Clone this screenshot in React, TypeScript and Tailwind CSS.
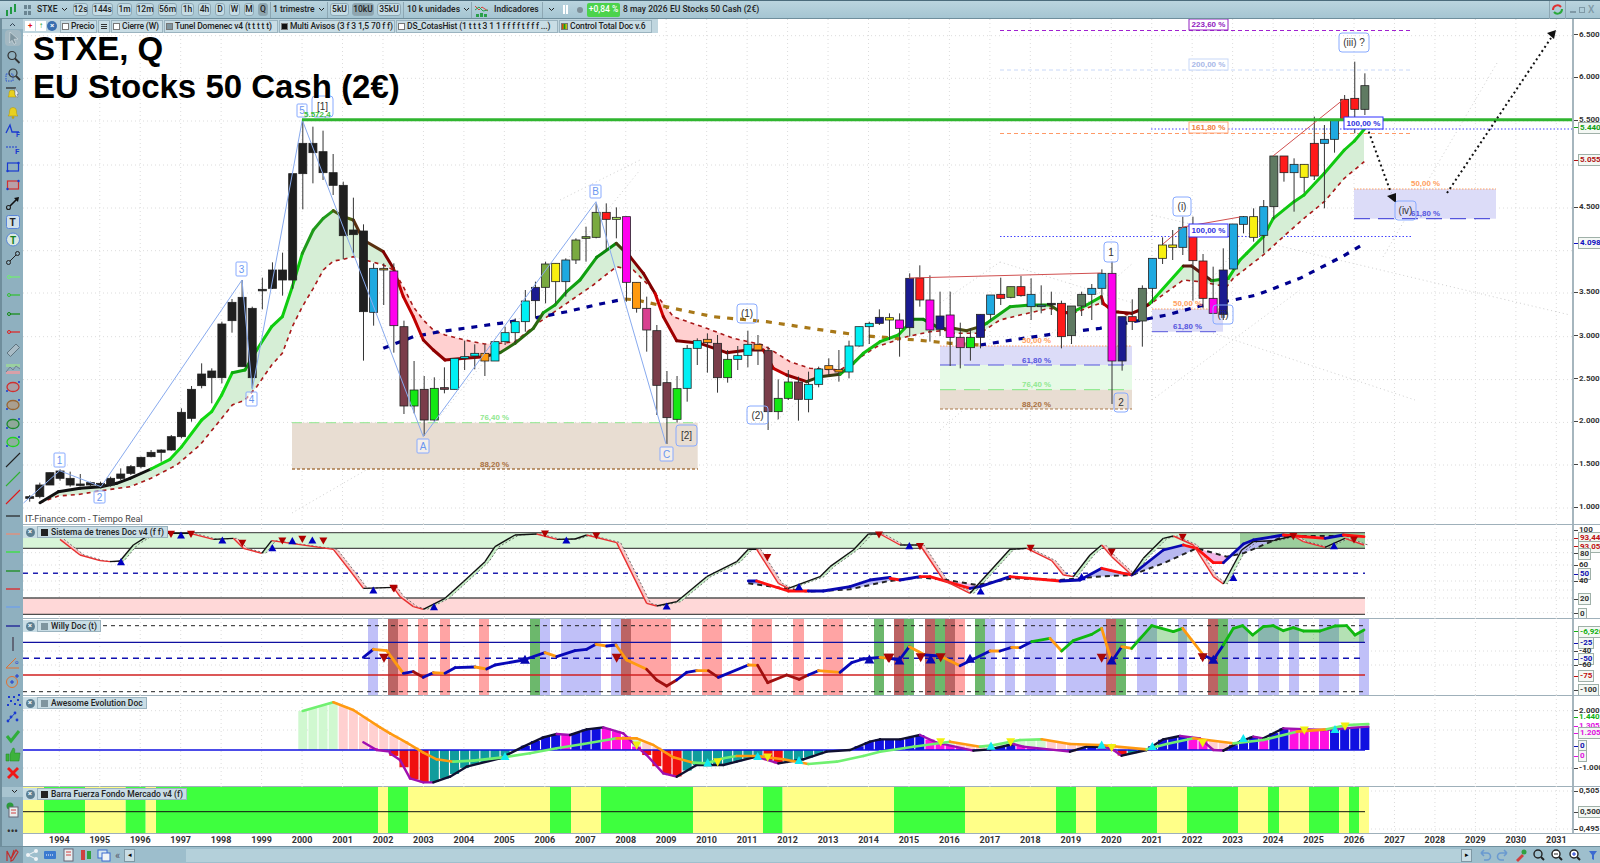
import React from "react";

type P = [number, number, string?];
const conv = (a: any[], ox: number, oy: number): P[] => a.map(([x, y, c]) => [ox + x / 3, oy + y / 3, c]);
const interp = (pts: P[], x: number) => {
  if (x <= pts[0][0]) return pts[0][1];
  for (let i = 1; i < pts.length; i++) {
    if (x <= pts[i][0]) {
      const [x0, y0] = pts[i - 1];
      const [x1, y1] = pts[i];
      return y0 + ((y1 - y0) * (x - x0)) / (x1 - x0 || 1);
    }
  }
  return pts[pts.length - 1][1];
};
const ptsStr = (p: P[]) => p.map((q) => `${q[0].toFixed(1)},${q[1].toFixed(1)}`).join(" ");

const COL: Record<string, string> = {
  k: "#1f1f1f", b: "#1fa9e0", c: "#00f0f4", m: "#ff00ee", br: "#7a3d4a", g: "#14e814", o: "#ff9a10",
  y: "#f8f010", r: "#ff1a1a", n: "#1a1a90", ol: "#7aaa40", gg: "#5f7a62", pk: "#d84090", lg: "#b0e860", t: "#2a8a9a", oy: "#c0a030",
};
// [top, bottom, wickTop, wickBottom, colour] in zoom coordinates
const C5: any[] = [
  [1190,1195,1185,1205,"k"],[1155,1190,1148,1195,"k"],[1118,1155,1118,1155,"k"],[1113,1135,1108,1142,"k"],[1135,1155,1115,1160,"k"],
  [1152,1155,1122,1158,"k"],[1148,1155,1145,1160,"k"],[1150,1160,1145,1165,"k"],[1135,1155,1130,1160,"k"],[1122,1135,1105,1140,"k"],
  [1100,1120,1095,1125,"k"],[1072,1100,1070,1105,"k"],[1057,1070,1050,1072,"k"],[1050,1057,1048,1085,"k"],[1010,1050,1005,1052,"k"],
  [937,1010,925,1015,"k"],[868,955,858,965,"k"],[822,857,790,865,"k"],[813,833,805,910,"k"],[672,833,665,850,"k"],
  [607,662,597,698,"k"],[592,800,540,800,"k"],[625,833,620,865,"k"],[568,572,533,628,"k"],[510,565,487,567,"k"],
  [510,540,458,587,"k"],[221,540,221,567,"k"],[130,221,60,328,"k"],[130,158,80,250,"k"],[155,218,92,240,"k"],
  [218,256,162,285,"k"],[256,407,245,477,"k"],[390,404,293,460,"k"],[393,635,373,782,"k"],[505,637,490,677,"b"],
  [505,510,490,615,"oy"],[513,677,490,758,"m"],[680,918,662,942,"br"],[870,918,783,940,"g"],[868,960,828,1008,"br"],
  [865,960,832,965,"g"],[863,868,802,880,"br"],[775,868,775,868,"c"],[770,775,722,810,"c"],[760,768,733,808,"c"],
  [760,783,733,828,"o"],[725,783,725,783,"c"],
];
const C6: any[] = [
  [458,485,440,495,"c"],[425,458,415,490,"c"],[363,425,330,455,"c"],[322,362,305,415,"n"],[252,322,245,370,"ol"],
  [250,305,250,370,"y"],[240,305,235,350,"b"],[180,240,175,252,"ol"],[170,175,140,245,"ol"],[97,172,70,175,"ol"],
  [97,118,70,210,"r"],[112,118,82,175,"lg"],[110,307,110,365,"m"],[307,385,307,398,"o"],[385,450,350,515,"pk"],
  [452,616,435,705,"br"],[608,713,573,792,"br"],[626,718,588,728,"g"],[505,625,495,665,"c"],[482,505,475,555,"c"],
  [478,488,460,578,"o"],[490,593,465,638,"br"],[538,593,510,608,"g"],[527,538,498,570,"c"],[493,526,452,562,"c"],
  [493,510,465,555,"o"],[512,695,500,750,"br"],[655,695,598,718,"g"],[606,655,570,660,"g"],[606,658,590,722,"br"],
  [613,658,575,697,"c"],[567,613,560,622,"c"],[557,568,535,585,"o"],[569,576,510,605,"o"],[498,576,482,595,"c"],
  [440,498,440,500,"c"],[430,440,425,492,"c"],[412,430,388,435,"n"],[413,420,400,480,"y"],[420,445,400,530,"m"],
  [295,443,280,470,"n"],[294,360,256,380,"r"],[360,450,286,485,"m"],[408,448,335,468,"n"],
];
const C7: any[] = [
  [405,472,335,558,"m"],[472,503,428,565,"pk"],[472,503,445,542,"g"],[403,472,403,505,"n"],[345,403,345,420,"b"],
  [343,355,293,375,"r"],[320,352,320,355,"ol"],[320,347,288,350,"r"],[343,380,295,420,"b"],[375,380,316,400,"t"],
  [370,374,335,405,"k"],[370,470,362,505,"r"],[378,467,378,492,"gg"],[343,378,335,408,"gg"],[325,343,312,420,"b"],
  [280,325,268,375,"b"],[280,543,245,672,"m"],[410,543,410,572,"n"],[410,425,358,450,"r"],[325,423,316,500,"gg"],
  [235,325,235,370,"b"],[195,235,172,252,"y"],[195,202,150,240,"y"],[142,202,110,225,"b"],[170,242,110,362,"r"],
  [243,355,222,385,"r"],[355,400,260,400,"m"],[270,403,205,420,"n"],[132,267,132,270,"b"],
];
const C2: any[] = [
  [650,673,648,700,"b"],[650,712,625,725,"y"],[620,706,600,760,"b"],[468,620,468,658,"gg"],[468,518,468,545,"r"],
  [493,518,475,635,"b"],[493,532,493,578,"y"],[430,528,350,540,"r"],[418,430,375,625,"b"],[360,418,360,458,"b"],
  [298,360,285,360,"r"],[295,328,185,400,"r"],[257,328,220,345,"gg"],
];
const candles = [
  ...C5.map((c) => ({ c, oy: 100 })), ...C6.map((c) => ({ c, oy: 180 })), ...C7.map((c) => ({ c, oy: 180 })), ...C2.map((c) => ({ c, oy: 0 })),
].map(({ c, oy }, i) => ({
  x: 29.7 + 10.115 * i, top: oy + c[0] / 3, bot: oy + c[1] / 3, wt: oy + c[2] / 3, wb: oy + c[3] / 3, col: COL[c[4]],
}));

const thick: P[] = [
  ...conv([[120,1208],[175,1175],[240,1165],[303,1160],[350,1150],[390,1135],[453,1107],[510,1078],[545,1040],[605,960],[635,935],[665,885],[697,818],[735,810],[770,750],[815,680],[847,650],[877,560],[907,460],[940,390],[970,355],[1000,332],[1030,350],[1060,360],[1090,420],[1150,455],[1180,505],[1210,590],[1240,650],[1270,720],[1300,750],[1335,780],[1394,775],[1454,770]], 0, 100),
  ...conv([[0,518],[45,490],[100,445],[130,398],[165,375],[200,335],[240,300],[290,232],[349,190],[390,230],[430,280],[465,340],[490,410],[530,482],[600,490],[680,518],[745,510],[790,510],[820,565],[860,585],[920,605],[960,590],[1020,583],[1060,550],[1090,520],[1140,485],[1195,465],[1240,418],[1270,418],[1310,440],[1350,450]], 500, 180),
  ...conv([[160,445],[200,452],[240,440],[260,430],[330,380],[390,375],[450,375],[480,395],[510,400],[560,375],[604,350],[610,370],[640,395],[695,400],[720,390],[750,370],[850,258],[875,258],[935,302],[985,295],[1020,240]], 900, 180),
  ...conv([[440,760],[490,710],[520,655],[582,605],[612,585],[673,520],[733,450],[763,423],[793,388]], 1100, 0),
];
const dashed: P[] = [
  ...conv([[120,1208],[175,1188],[240,1183],[303,1172],[390,1160],[453,1135],[530,1095],[600,1035],[665,955],[697,915],[735,900],[770,860],[815,795],[847,760],[877,680],[907,620],[940,565],[970,510],[1000,483],[1030,478],[1060,470],[1150,495],[1180,510],[1210,560],[1240,620],[1270,660],[1300,690],[1335,705],[1394,720],[1454,732]], 0, 100),
  ...conv([[0,490],[45,485],[120,425],[200,370],[280,315],[349,260],[400,270],[450,320],[520,410],[620,445],[700,475],[790,495],[870,545],[930,565],[1020,570],[1060,545],[1130,500],[1220,470],[1290,455],[1350,450]], 500, 180),
  ...conv([[160,460],[240,460],[300,420],[360,405],[450,385],[520,400],[600,370],[680,405],[740,380],[850,300],[900,305],[980,320],[1000,295],[1090,225]], 900, 180),
  ...conv([[550,710],[612,655],[673,605],[733,535],[793,485]], 1100, 0),
];
const THICK_COL: [number, string][] = [
  [151,"#111111"],[230,"#10d810"],[260,"#0fa90f"],[305,"#0fcc0f"],[333,"#1f9a1a"],[350,"#4a5a10"],[385,"#5a3010"],[395,"#800000"],[420,"#c00000"],[480,"#900000"],[505,"#5a2000"],[540,"#2a6a10"],[590,"#10a010"],[617,"#0a8a0a"],[630,"#4a3a10"],[650,"#800000"],[667,"#d00000"],[680,"#a00000"],[763,"#800000"],[790,"#c00000"],[810,"#900000"],[840,"#3a3a10"],[870,"#10b010"],[915,"#10c010"],[935,"#0a7a0a"],[980,"#4a4a10"],[1050,"#10a810"],[1058,"#3a5a10"],[1075,"#b00000"],[1100,"#10b810"],[1115,"#c00000"],[1145,"#800000"],[1183,"#10d010"],[1215,"#5a1a10"],[1228,"#10a010"],[1400,"#10c810"],
];
const thickColor = (x: number) => (THICK_COL.find((t) => x <= t[0]) || THICK_COL[THICK_COL.length - 1])[1];

const blueLong: P[] = [
  ...conv([[1150,745],[1240,710],[1320,695],[1500,670]], 0, 100),
  ...conv([[0,430],[100,415],[200,395],[300,372],[375,357]], 500, 180),
];
const brownLong: P[] = [
  ...conv([[375,357],[410,360],[520,385],[640,410],[800,425],[1000,455],[1100,468],[1250,480],[1350,490]], 500, 180),
  ...conv([[240,495]], 900, 180),
];
const navyLong: P[] = conv([[240,495],[350,478],[460,462],[600,445],[700,425],[800,405],[900,378],[1000,360],[1070,345],[1200,295],[1330,228]], 900, 180).concat(conv([[790,733]], 1100, 0));

const zig: P[] = [[23.5,503],...conv([[179,1112],[303,1160],[726,540],[757,868],[907,60],[1270,1010]],0,100),...conv([[288,65],[498,792]],500,180)] as P[];
const fans = [
  [940,430,1133,263],[940,303,1000,262],[1000,262,1133,303],[1152,400,1152,215],[1152,215,1260,240],[1213,333,1415,400],[1267,243,1570,315],[1383,257,1497,63],[292,513,423,437],[423,437,640,170],[768,428,867,340],[560,200,640,160],[1152,400,1300,290],[1170,330,1260,220],
];

function Tri({ x, y, s, col, down }: { x: number; y: number; s: number; col: string; down?: boolean }) {
  const h = s * 0.9;
  const p = down ? `${x - s / 2},${y - h / 2} ${x + s / 2},${y - h / 2} ${x},${y + h / 2}` : `${x - s / 2},${y + h / 2} ${x + s / 2},${y + h / 2} ${x},${y - h / 2}`;
  return <polygon points={p} fill={col} />;
}

function Box({ x0, y0, x1, y1, t, fs = 10, col = "#333", border = "#88aaff", bw = 1, fill = "none", r = 2, weight }: any) {
  return (
    <g>
      <rect x={x0} y={y0} width={x1 - x0} height={y1 - y0} rx={r} fill={fill} stroke={border} strokeWidth={bw} />
      <text x={(x0 + x1) / 2} y={(y0 + y1) / 2 + fs * 0.36} textAnchor="middle" fontSize={fs} fill={col} fontWeight={weight} fontFamily="'Liberation Sans',sans-serif">
        {t}
      </text>
    </g>
  );
}
function Pct({ x, y, t, col }: { x: number; y: number; t: string; col: string }) {
  return (
    <text x={x} y={y + 3} fontSize={8} fontWeight={700} fill={col} fontFamily="'Liberation Sans',sans-serif" textLength={29} lengthAdjust="spacingAndGlyphs">
      {t}
    </text>
  );
}

const YEARX = Array.from({ length: 38 }, (_, i) => ({ y: 1994 + i, x: 59.3 + 40.46 * i }));

function Grid({ top, bottom, ys }: { top: number; bottom: number; ys: number[] }) {
  return (
    <g stroke="#dcdcdc" strokeWidth={1} strokeDasharray="1 3">
      {YEARX.map((g) => (
        <line key={g.y} x1={g.x} x2={g.x} y1={top} y2={bottom} />
      ))}
      {ys.map((y) => (
        <line key={y} x1={23} x2={1572} y1={y} y2={y} />
      ))}
    </g>
  );
}

function MainSvg() {
  const cloud: React.ReactNode[] = [];
  for (let x = 40; x < 1364; x += 4) {
    const x2 = Math.min(x + 4, 1364.5);
    const a0 = interp(thick, x), a1 = interp(thick, x2), b0 = interp(dashed, x), b1 = interp(dashed, x2);
    const up = a0 + a1 <= b0 + b1;
    cloud.push(<polygon key={x} points={`${x},${a0} ${x2},${a1} ${x2},${b1} ${x},${b0}`} fill={up ? "#d6eed6" : "#ffd0d0"} />);
  }
  return (
    <svg viewBox="23 19 1549 505" width={1549} height={505} className="block">
      <Grid top={19} bottom={524} ys={[35.7,78.3,121,165,208,250.7,293,336.7,379.6,422.4,465,508]} />
      <g stroke="#cfcfcf" strokeWidth={1} strokeDasharray="1 3">
        {fans.map((f, i) => <line key={i} x1={f[0]} y1={f[1]} x2={f[2]} y2={f[3]} />)}
      </g>
      {/* retracement zones */}
      <rect x={292} y={422.7} width={405.7} height={46.3} fill="#e8ddd2" />
      <line x1={292} x2={698} y1={422.7} y2={422.7} stroke="#90e890" strokeDasharray="10 7" />
      <line x1={292} x2={698} y1={469} y2={469} stroke="#a87848" strokeWidth={1.5} strokeDasharray="3 2" />
      <rect x={940} y={346} width={192} height={19} fill="#dcdcf8" />
      <rect x={940} y={365} width={192} height={24.7} fill="#e6fae6" />
      <rect x={940} y={389.7} width={192} height={19.3} fill="#e8ddd2" />
      <line x1={940} x2={1132} y1={346} y2={346} stroke="#ffa060" strokeDasharray="1.5 1.5" />
      <line x1={940} x2={1132} y1={365} y2={365} stroke="#5555dd" strokeWidth={1} strokeDasharray="16 8" />
      <line x1={940} x2={1132} y1={389.7} y2={389.7} stroke="#80e880" strokeDasharray="16 8" />
      <line x1={940} x2={1132} y1={409} y2={409} stroke="#a87848" strokeWidth={1.2} strokeDasharray="3 2" />
      <rect x={1152} y={309} width={71} height={22.7} fill="#dcdcf8" />
      <line x1={1152} x2={1223} y1={309} y2={309} stroke="#ffa060" strokeDasharray="1.5 1.5" />
      <line x1={1152} x2={1223} y1={331.7} y2={331.7} stroke="#5555dd" strokeDasharray="16 8" />
      <rect x={1354} y={189} width={142} height={29.7} fill="#dcdcf8" />
      <line x1={1354} x2={1496} y1={189} y2={189} stroke="#ffa060" strokeDasharray="1.5 1.5" />
      <line x1={1354} x2={1496} y1={218.7} y2={218.7} stroke="#5555dd" strokeWidth={1.2} strokeDasharray="16 8" />
      {/* fib lines */}
      <line x1={1000} x2={1413} y1={30.5} y2={30.5} stroke="#a020d0" strokeWidth={1} strokeDasharray="4 3" />
      <line x1={1000} x2={1413} y1={70} y2={70} stroke="#c8d8f8" strokeWidth={1} strokeDasharray="4 3" />
      <line x1={1000} x2={1413} y1={133.5} y2={133.5} stroke="#ff9966" strokeWidth={1} strokeDasharray="4 3" />
      <line x1={1151} x2={1572} y1={129} y2={129} stroke="#4444ff" strokeDasharray="1.5 2" />
      <line x1={1000} x2={1413} y1={236.5} y2={236.5} stroke="#4444ff" strokeDasharray="1.5 2" />
      {/* cloud and averages */}
      <g>{cloud}</g>
      <polyline points={ptsStr(dashed)} fill="none" stroke="#a81818" strokeWidth={1.6} strokeDasharray="4 4" />
      <polyline points={ptsStr(blueLong)} fill="none" stroke="#000090" strokeWidth={3.2} strokeDasharray="6 7" />
      <polyline points={ptsStr(brownLong)} fill="none" stroke="#a87818" strokeWidth={3.2} strokeDasharray="6 7" />
      <polyline points={ptsStr(navyLong)} fill="none" stroke="#000090" strokeWidth={3.2} strokeDasharray="6 7" />
      <g fill="none" strokeWidth={3} strokeLinecap="round">
        {thick.slice(1).map((p, i) => (
          <line key={i} x1={thick[i][0]} y1={thick[i][1]} x2={p[0]} y2={p[1]} stroke={thickColor((thick[i][0] + p[0]) / 2)} />
        ))}
      </g>
      {/* candles */}
      {candles.map((c, i) => (
        <g key={i}>
          <line x1={c.x} x2={c.x} y1={c.wt} y2={c.wb} stroke="#333" strokeWidth={1} />
          <rect x={c.x - 4} y={c.top} width={8} height={Math.max(c.bot - c.top, 1.5)} fill={c.col} stroke="#222" strokeWidth={0.8} />
        </g>
      ))}
      {/* trend */}
      <g stroke="#d05050" strokeWidth={1} fill="none">
        <polyline points="909,278 1101,273" />
        <polyline points="1163,244 1183,227 1240,217" />
        <polyline points="1273,156 1344,99" />
      </g>
      <polyline points={ptsStr(zig)} fill="none" stroke="#88aaee" strokeWidth={1} />
      <line x1={302} x2={1572} y1={119.7} y2={119.7} stroke="#2fb52f" strokeWidth={3} />
      {/* arrows */}
      <line x1={1367} y1={127} x2={1391} y2={193} stroke="#111" strokeWidth={2} strokeDasharray="2 3" />
      <polygon points="1396,203 1387,196 1396,193" fill="#111" />
      <line x1={1447} y1={193} x2={1551} y2={38} stroke="#111" strokeWidth={2} strokeDasharray="2 3" />
      <polygon points="1556,30 1547,33 1554,39" fill="#111" />
      {/* labels */}
      <Box x0={1189} y0={19} x1={1228} y1={30} t="223,60 %" fs={8} col="#9020c0" border="#9020c0" r={0} weight={700} fill="#fff" />
      <Box x0={1189} y0={59} x1={1228} y1={70} t="200,00 %" fs={8} col="#a8b8e8" border="#c8d8f8" r={0} weight={700} fill="#fff" />
      <Box x0={1189} y0={122} x1={1228} y1={133} t="161,80 %" fs={8} col="#f08040" border="#ffaa80" r={0} weight={700} fill="#fff" />
      <Box x0={1344} y0={117} x1={1383} y1={129} t="100,00 %" fs={8} col="#3030e0" border="#3030ff" r={0} weight={700} fill="#fff" />
      <Box x0={1189} y0={224} x1={1228} y1={237} t="100,00 %" fs={8} col="#3030e0" border="#3030ff" r={0} weight={700} fill="#fff" />
      <Pct x={480} y={417} t="76,40 %" col="#90e890" />
      <Pct x={480} y={464} t="88,20 %" col="#a87040" />
      <Pct x={1022} y={340} t="50,00 %" col="#ffa060" />
      <Pct x={1022} y={360} t="61,80 %" col="#5555dd" />
      <Pct x={1022} y={384} t="76,40 %" col="#90e890" />
      <Pct x={1022} y={404} t="88,20 %" col="#a87040" />
      <Pct x={1173} y={303} t="50,00 %" col="#ffa060" />
      <Pct x={1173} y={326} t="61,80 %" col="#5555dd" />
      <Pct x={1411} y={183} t="50,00 %" col="#ffa060" />
      <Pct x={1411} y={212.7} t="61,80 %" col="#5555dd" />
      {[
        [54,453,65,467,"1"],[94,491,105,503,"2"],[236,262,247,276,"3"],[246,392,257,406,"4"],[297,104,307,117,"5"],
        [417,439,429,453,"A"],[590,185,601,198,"B"],[660,447,673,461,"C"],
      ].map((b: any) => (
        <Box key={b[4]} x0={b[0]} y0={b[1]} x1={b[2]} y1={b[3]} t={b[4]} col="#6a96f0" r={1} fs={10} fill="#ffffff80" />
      ))}
      {[
        [312,96,333,117,"[1]"],[676,425,697,446,"[2]"],[737,304,757,323,"(1)"],[747,406,768,424,"(2)"],[1104,242,1118,262,"1"],[1114,393,1128,412,"2"],
        [1173,197,1191,216,"(i)"],[1213,305,1233,324,"(ii)"],[1339,33,1369,52,"(iii) ?"],[1395,201,1416,220,"(iv)"],
      ].map((b: any) => (
        <Box key={b[4]} x0={b[0]} y0={b[1]} x1={b[2]} y1={b[3]} t={b[4]} r={3} />
      ))}
      <text x={304} y={117} fontSize={8} fontWeight={700} fill="#40c040" fontFamily="'Liberation Sans',sans-serif">5.572,4</text>
    </svg>
  );
}

// ---------- Sistema de trenes
const stoch: P[] = [
  ...conv([[180,118],[240,165],[300,182],[330,185],[360,183],[400,135],[440,110],[480,100],[570,100],[640,118],[700,115],[730,145],[785,160],[815,122],[1000,148],[1060,225],[1090,265],[1180,262]], 0, 500),
  ...conv([[30,230],[70,260],[100,268],[165,235],[220,185],[285,125],[315,80],[375,45],[440,42],[500,58],[555,57],[590,45],[680,68],[770,250],[800,258],[860,245],[950,170],[1040,125],[1075,88],[1100,88],[1165,190],[1195,205],[1290,170],[1320,140],[1390,90],[1435,42]], 390, 520),
  ...conv([[0,42],[60,75],[120,75],[190,180],[270,220],[390,88],[440,85],[515,122],[550,165],[580,170],[630,105],[665,75],[695,110],[755,165],[790,115],[850,55],[880,48],[940,75],[1000,170],[1030,192],[1085,90],[1120,65],[1180,62],[1240,48],[1270,65],[1335,82],[1395,55],[1452,75]], 880, 520),
];
const t2seg: any[] = [
  ...conv([[1075,183],[1100,183,"b"],[1195,213,"r"],[1255,213,"r"],[1300,213,"b"],[1380,200,"b"],[1440,180,"b"],[1500,172,"b"]], 390, 520),
  ...conv([[30,175,"b"],[60,180,"r"],[120,170,"b"],[150,170,"r"],[270,205,"r"],[300,200,"b"],[390,170,"b"],[540,183,"r"],[600,180,"b"],[665,145,"b"],[720,158,"r"],[755,165,"r"],[850,90,"b"],[910,75,"b"],[950,85,"r"],[1000,128,"r"],[1030,128,"r"],[1090,72,"b"],[1120,60,"b"],[1210,45,"b"],[1335,55,"r"],[1390,45,"b"],[1452,50,"r"]], 880, 520),
];
const t2dash: P[] = [
  ...conv([[1075,190],[1255,215],[1380,208],[1500,182]], 390, 520),
  ...conv([[30,183],[120,172],[200,180],[290,195],[400,175],[540,180],[650,170],[755,165],[850,130],[950,85],[1040,110],[1090,100],[1180,62],[1210,50],[1270,48],[1452,48]], 880, 520),
];
const up2 = [...conv([[363,185],[543,105],[667,120],[817,143],[877,122],[937,120],[1120,270]],0,500),...conv([[132,260],[529,60],[830,258],[1227,200]],390,520),...conv([[88,77],[302,213],[605,170],[1060,172],[1362,77]],880,520)];
const dn2 = [...conv([[513,103],[573,103],[727,130],[847,123],[907,118],[970,123],[1182,267]],0,500),...conv([[10,205],[465,42],[619,48],[1132,113],[1467,45]],390,520),...conv([[120,80],[452,85],[695,97],[908,52],[1240,50],[1422,60]],880,520)];

function TrenesSvg() {
  const shade: React.ReactNode[] = [];
  for (let i = 1; i < stoch.length; i++) {
    const a = stoch[i - 1], b = stoch[i];
    const falling = b[1] > a[1];
    shade.push(<polygon key={i} points={`${a[0]},${a[1]} ${b[0]},${b[1]} ${b[0] + 4},${b[1]} ${a[0] + 4},${a[1]}`} fill={falling ? "#f8c8c8" : "#c8f0c8"} />);
  }
  const cloud: React.ReactNode[] = [];
  for (let x = 748; x < 1364; x += 4) {
    const a0 = interp(t2seg, x), a1 = interp(t2seg, x + 4), b0 = interp(t2dash, x), b1 = interp(t2dash, x + 4);
    const above = a0 + a1 < b0 + b1;
    cloud.push(<polygon key={x} points={`${x},${a0} ${x + 4},${a1} ${x + 4},${b1} ${x},${b0}`} fill={above ? "#b8b8f0" : "#f0b8e8"} />);
  }
  const comp = stoch.map((p) => [p[0] + 4, p[1]] as P);
  return (
    <svg viewBox="23 524 1549 94" width={1549} height={94} className="block">
      <Grid top={524} bottom={618} ys={[540,552.7,565,581,590,598,612.7]} />
      <rect x={23} y={533} width={1342} height={15} fill="#d8f5d8" />
      <rect x={1240} y={533} width={125} height={15} fill="#60a86080" />
      <rect x={23} y={598} width={1342} height={16} fill="#ffd8d8" />
      <line x1={23} x2={1365} y1={532.7} y2={532.7} stroke="#333" />
      <line x1={23} x2={1365} y1={548.3} y2={548.3} stroke="#222" />
      <line x1={23} x2={1365} y1={598} y2={598} stroke="#555" strokeWidth={1.5} />
      <line x1={23} x2={1365} y1={614.3} y2={614.3} stroke="#222" />
      <line x1={23} x2={1365} y1={573.3} y2={573.3} stroke="#2020b0" strokeWidth={1.5} strokeDasharray="5 5" />
      {shade}
      {cloud}
      <polyline points={ptsStr(comp)} fill="none" stroke="#555" strokeWidth={0.8} strokeDasharray="2 2" />
      <polyline points={ptsStr(t2dash)} fill="none" stroke="#222" strokeWidth={2} strokeDasharray="5 4" />
      {t2seg.slice(1).map((p, i) => (
        <line key={i} x1={t2seg[i][0]} y1={t2seg[i][1]} x2={p[0]} y2={p[1]} stroke={p[2] === "r" ? "#ff1010" : "#0808b0"} strokeWidth={2.8} strokeLinecap="round" />
      ))}
      {stoch.slice(1).map((p, i) => {
        const a = stoch[i];
        return <line key={i} x1={a[0]} y1={a[1]} x2={p[0]} y2={p[1]} stroke={p[1] > a[1] + 0.5 ? "#e83030" : "#111"} strokeWidth={1.4} />;
      })}
      {up2.map((p, i) => <Tri key={i} x={p[0]} y={p[1]} s={8} col="#0000c0" />)}
      {dn2.map((p, i) => <Tri key={i} x={p[0]} y={p[1]} s={8} col="#b00000" down />)}
    </svg>
  );
}

// ---------- Willy
const bands: [number, number, string][] = [
  [368,378,"L"],[388,398,"D"],[398,408,"P"],[418,428,"P"],[440,450,"P"],[479,489,"P"],[530,540,"G"],[540,550,"L"],[561,601,"L"],[611,621,"L"],[621,631,"D"],[631,671,"P"],[702,722,"P"],[752,772,"P"],[793,804,"P"],[823,843,"P"],[874,884,"G"],
  [894,904,"D"],[904,914,"G"],[925,935,"D"],[935,945,"G"],[945,955,"D"],[955,965,"P"],[975,985,"G"],[985,995,"L"],[1005,1015,"L"],[1025,1056,"L"],[1066,1106,"L"],[1106,1116,"D"],[1116,1126,"G"],[1137,1157,"L"],[1178,1187,"L"],[1208,1218,"D"],[1218,1228,"G"],[1228,1248,"L"],[1258,1279,"L"],[1289,1299,"L"],[1319,1339,"L"],[1359,1369,"L"],
];
const BC: Record<string, string> = { L: "#c0c0f8", D: "#bc6464", P: "#ffa4a4", G: "#6cb86c" };
const will: any[] = [
  ...conv([[1090,472],[1120,448,"b"],[1160,452,"o"]], 0, 500),
  ...conv([[40,460,"o"],[70,455,"b"],[100,472,"d"],[130,458,"b"],[165,460,"o"],[195,443,"b"],[255,441,"b"],[290,447,"o"],[315,435,"b"],[400,420,"b"],[465,398,"b"],[500,410,"o"],[555,392,"b"],[590,388,"b"],[618,373,"b"],[650,378,"o"],[678,375,"b"],[710,420,"o"],[770,448,"o"],[800,480,"d"],[830,498,"d"],[860,480,"d"],[890,457,"b"],[920,452,"b"],[955,452,"o"],[985,472,"d"],[1075,435,"b"],[1103,436,"o"],[1133,488,"d"],[1190,465,"d"],[1228,478,"d"],[1255,465,"d"],[1285,452,"b"],[1350,457,"o"],[1385,428,"b"],[1420,417,"b"],[1470,412,"b"]], 390, 520),
  ...conv([[30,415,"o"],[58,420,"b"],[88,380,"b"],[135,405,"o"],[180,408,"b"],[240,437,"o"],[330,393,"b"],[360,393,"o"],[395,382,"b"],[420,383,"o"],[455,365,"b"],[510,355,"g"],[545,393,"o"],[580,362,"g"],[635,343,"g"],[665,325,"g"],[695,425,"o"],[725,380,"b"],[755,385,"o"],[815,317,"g"],[880,335,"g"],[908,325,"g"],[970,405,"o"],[1000,420,"b"],[1030,375,"b"],[1060,325,"g"],[1088,317,"g"],[1118,345,"g"],[1150,320,"g"],[1180,317,"g"],[1210,332,"g"],[1240,323,"g"],[1270,333,"g"],[1320,333,"g"],[1365,318,"g"],[1400,317,"g"],[1425,345,"g"],[1452,330,"g"]], 880, 520),
];
const WC: Record<string, string> = { b: "#0808b8", o: "#ff9a10", d: "#a01010", g: "#10b810" };
const upW = [...conv([[405,418],[1438,417]],390,520),...conv([[58,420],[152,417],[270,415],[695,420],[1000,418]],880,520)];
const dnW = [...conv([[1152,475]],0,500),...conv([[680,415],[1495,415]],390,520),...conv([[28,415],[122,413],[182,413],[665,415],[968,413]],880,520)];

function WillySvg() {
  const area = conv([[760,367],[815,317],[880,335],[908,325],[945,367]], 880, 520);
  const area2 = conv([[1030,367],[1060,325],[1088,317],[1118,345],[1150,320],[1180,317],[1210,332],[1240,323],[1270,333],[1320,333],[1365,318],[1400,317],[1425,345],[1452,330],[1452,367]], 880, 520);
  return (
    <svg viewBox="23 618 1549 77" width={1549} height={77} className="block">
      <Grid top={618} bottom={695} ys={[651,665]} />
      {bands.map((b) => <rect key={b[0]} x={b[0]} y={619} width={b[1] - b[0]} height={76} fill={BC[b[2]]} />)}
      <polygon points={ptsStr(area)} fill="#10a01050" />
      <polygon points={ptsStr(area2)} fill="#10a01050" />
      <line x1={23} x2={1365} y1={625.7} y2={625.7} stroke="#222" strokeDasharray="4 4" />
      <line x1={23} x2={1365} y1={642.3} y2={642.3} stroke="#1010a0" strokeWidth={1.3} />
      <line x1={23} x2={1365} y1={658.3} y2={658.3} stroke="#1010b0" strokeWidth={1.5} strokeDasharray="6 5" />
      <line x1={23} x2={1365} y1={675} y2={675} stroke="#d02020" strokeWidth={1.4} />
      <line x1={23} x2={1365} y1={691.7} y2={691.7} stroke="#222" strokeDasharray="4 4" />
      {will.slice(1).map((p, i) => (
        <line key={i} x1={will[i][0]} y1={will[i][1]} x2={p[0]} y2={p[1]} stroke={WC[p[2]]} strokeWidth={2.8} strokeLinecap="round" />
      ))}
      {upW.map((p, i) => <Tri key={i} x={p[0]} y={p[1]} s={10} col="#0808b0" />)}
      {dnW.map((p, i) => <Tri key={i} x={p[0]} y={p[1]} s={10} col="#a80808" down />)}
    </svg>
  );
}

// ---------- Awesome
const sig: any[] = [
  ...conv([[908,633],[1000,607,"l"],[1060,630,"o"],[1140,682,"o"],[1170,700,"o"]], 0, 500),
  ...conv([[0,640,"o"],[50,668,"o"],[100,698,"o"],[140,718,"o"],[190,725,"o"],[250,722,"l"],[340,712,"l"],[420,700,"l"],[500,685,"l"],[580,672,"l"],[680,655,"l"],[740,655,"o"],[790,675,"o"],[850,712,"o"],[910,728,"o"],[950,730,"l"],[1000,715,"l"],[1040,708,"l"],[1100,708,"o"],[1180,718,"o"],[1255,732,"o"],[1340,725,"l"],[1420,708,"l"],[1470,695,"l"]], 390, 520),
  ...conv([[0,695,"l"],[100,680,"l"],[210,665,"l"],[300,680,"o"],[330,677,"l"],[420,660,"l"],[485,658,"l"],[570,672,"o"],[660,675,"o"],[800,688,"o"],[860,672,"l"],[940,655,"l"],[1060,670,"o"],[1150,660,"l"],[1250,635,"l"],[1340,628,"o"],[1400,615,"l"],[1465,612,"l"]], 880, 520),
];
const hist: any[] = [
  ...conv([[1090,727],[1130,750,"p"],[1170,755,"p"]], 0, 500),
  ...conv([[0,700,"p"],[30,720,"p"],[60,775,"p"],[100,787,"p"],[130,787,"p"],[180,770,"k"],[230,740,"k"],[330,715,"k"],[400,680,"k"],[460,652,"k"],[500,642,"k"],[540,645,"p"],[590,628,"k"],[640,622,"k"],[700,640,"p"],[740,680,"p"],[770,705,"p"],[820,760,"p"],[860,770,"p"],[920,735,"k"],[1000,735,"k"],[1040,725,"k"],[1100,710,"k"],[1165,730,"p"],[1240,718,"k"],[1310,695,"k"],[1380,690,"k"],[1440,665,"k"],[1470,658,"k"]], 390, 520),
  ...conv([[0,658,"k"],[60,658,"k"],[120,645,"k"],[170,668,"p"],[280,692,"p"],[330,688,"k"],[400,672,"k"],[430,680,"p"],[570,695,"p"],[620,680,"k"],[680,682,"k"],[700,690,"p"],[725,707,"p"],[800,690,"k"],[850,658,"k"],[900,648,"k"],[960,655,"p"],[1000,690,"p"],[1030,692,"p"],[1080,665,"k"],[1120,650,"k"],[1150,655,"p"],[1210,625,"k"],[1330,630,"p"],[1465,620,"p"]], 880, 520),
];
const upA = [...conv([[345,708],[953,727],[1103,708],[1227,720]],390,520),...conv([[333,677],[665,674],[817,678],[1090,654],[1365,627]],880,520)];
const dnA = [...conv([[740,677],[983,727],[1133,713]],390,520),...conv([[182,667],[392,667],[695,684],[968,670],[1273,632],[1395,620]],880,520)];

function AwesomeSvg() {
  const bars: React.ReactNode[] = [];
  for (let i = 27; i <= 132; i++) {
    const x = 29.7 + 10.115 * i;
    const s = interp(sig, x);
    const hasH = x >= 366;
    const h = hasH ? interp(hist, x) : 750;
    const hp = hasH ? interp(hist, x - 10) : 750;
    if (s < Math.min(h, 750)) {
      const sp = interp(sig, x - 10);
      bars.push(<rect key={`p${i}`} x={x - 4.5} y={s} width={9} height={Math.min(h, 750) - s} fill={s <= sp ? "#d0f8d0" : "#ffd0d0"} />);
    }
    if (hasH && h !== 750) {
      const rising = h <= hp;
      const col = h < 750 ? (rising ? "#1010e0" : "#ff10e0") : rising ? "#109c9c" : "#f01010";
      bars.push(<rect key={i} x={x - 4.5} y={Math.min(h, 750)} width={9} height={Math.abs(h - 750)} fill={col} />);
    }
  }
  return (
    <svg viewBox="23 695 1549 91" width={1549} height={91} className="block">
      <Grid top={695} bottom={786} ys={[710.7,730,768]} />
      {bars}
      <line x1={23} x2={1365} y1={750} y2={750} stroke="#1010e0" strokeWidth={1.3} />
      {hist.slice(1).map((p, i) => (
        <line key={i} x1={hist[i][0]} y1={hist[i][1]} x2={p[0]} y2={p[1]} stroke={p[2] === "k" ? "#101030" : "#a010b0"} strokeWidth={2.4} strokeLinecap="round" />
      ))}
      {sig.slice(1).map((p, i) => (
        <line key={i} x1={sig[i][0]} y1={sig[i][1]} x2={p[0]} y2={p[1]} stroke={p[2] === "l" ? "#70f070" : "#ff9a10"} strokeWidth={2.6} strokeLinecap="round" />
      ))}
      {upA.map((p, i) => <Tri key={i} x={p[0]} y={p[1]} s={9} col="#10e8f0" />)}
      {dnA.map((p, i) => <Tri key={i} x={p[0]} y={p[1]} s={9} col="#f0f010" down />)}
    </svg>
  );
}

const barra: [number, number, number][] = [
  [23,44,0],[44,85,1],[85,125.7,0],[125.7,145.7,1],[145.7,156,0],[156,378,1],[378,388,0],[388,408,1],[408,550,0],[550,571,1],[571,601,0],[601,693,1],[693,763,0],[763,782.6,1],[782.6,894,0],[894,965,1],[965,1056,0],[1056,1076,1],[1076,1096,0],[1096,1157,1],[1157,1187,0],[1187,1238,1],[1238,1268,0],[1268,1279,1],[1279,1309,0],[1309,1339,1],[1339,1349,0],[1349,1359,1],[1359,1369,0],
];
function BarraSvg() {
  return (
    <svg viewBox="23 786 1549 47" width={1549} height={47} className="block">
      <Grid top={786} bottom={833} ys={[791,829]} />
      {barra.map((b) => <rect key={b[0]} x={b[0]} y={787} width={b[1] - b[0]} height={46} fill={b[2] ? "#3eff3e" : "#ffff88"} />)}
      <line x1={23} x2={1365} y1={811.7} y2={811.7} stroke="#111" />
    </svg>
  );
}

function Axis({ top, h, items }: { top: number; h: number; items: any[] }) {
  return (
    <div className="relative w-[28px] overflow-hidden border-l-2 border-[#a6b6be] bg-white" style={{ height: h }}>
      {items.map((it, i) => (
        <div key={i} className="absolute left-0 flex items-center" style={{ top: it.y - top - 6 }}>
          <span className="h-px w-[4px] shrink-0" style={{ background: it.c || "#444" }} />
          <span
            className={`whitespace-nowrap px-px text-[8px] leading-[10px] font-bold ${it.box ? "border border-[#9fb0a8] bg-[#f4f8f4]" : ""}`}
            style={{ color: it.c || "#333" }}
          >
            {it.t}
          </span>
        </div>
      ))}
    </div>
  );
}

function Btn({ t, w, on }: { t: string; w: string; on?: boolean }) {
  return (
    <span className={`flex h-[13px] items-center justify-center rounded-[3px] border border-[#8fa9b5] text-[8.5px] font-medium text-[#222] ${w} ${on ? "bg-[#8fa6b0]" : "bg-[#c5dce5]"}`}>
      {t}
    </span>
  );
}
const Sep = () => <span className="mx-[2px] h-[16px] w-px shrink-0 bg-[#8da7b3]" />;
const Chev = () => (
  <svg width="7" height="5" viewBox="0 0 7 5" className="ml-[3px] shrink-0"><path d="M1 1l2.5 2.5L6 1" fill="none" stroke="#222" strokeWidth="1" /></svg>
);

function TopBar() {
  return (
    <div className="flex h-[19px] items-center whitespace-nowrap border-t border-b border-t-[#4b6b7b] border-b-[#6f8e9c] bg-gradient-to-b from-[#bad4de] to-[#a5c5d2] text-[8.5px] font-medium text-[#222]">
      <svg width="23" height="16" viewBox="0 0 23 16" className="shrink-0">
        <rect x="6" y="8" width="2" height="6" fill="#229944" /><rect x="10" y="5" width="2" height="7" fill="#229944" /><rect x="14" y="2" width="2" height="8" fill="#229944" />
      </svg>
      <svg width="8" height="12" viewBox="0 0 8 12" className="ml-[1px] shrink-0"><rect x="0" y="1" width="3" height="4" fill="#6a8592" /><rect x="4" y="1" width="3" height="4" fill="#6a8592" /><rect x="0" y="7" width="3" height="4" fill="#6a8592" /><rect x="4" y="7" width="3" height="4" fill="#6a8592" /></svg>
      <span className="ml-[5px] flex w-[36px] items-center">STXE<Chev /></span>
      <span className="flex items-center gap-[4px]">
        <Btn t="12s" w="w-[15px]" /><Btn t="144s" w="w-[21px]" /><Btn t="1m" w="w-[15px]" /><Btn t="12m" w="w-[18px]" /><Btn t="56m" w="w-[19px]" /><Btn t="1h" w="w-[13px]" /><Btn t="4h" w="w-[13px]" /><Btn t="D" w="w-[10px]" /><Btn t="W" w="w-[11px]" /><Btn t="M" w="w-[10px]" /><Btn t="Q" w="w-[10px]" on />
      </span>
      <Sep />
      <span className="flex w-[52px] items-center">1 trimestre<Chev /></span>
      <Sep />
      <span className="flex items-center gap-[3px]"><Btn t="5kU" w="w-[19px]" /><Btn t="10kU" w="w-[22px]" on /><Btn t="35kU" w="w-[24px]" /></span>
      <Sep />
      <span className="ml-[1px] flex w-[62px] items-center">10 k unidades<Chev /></span>
      <Sep />
      <svg width="16" height="14" viewBox="0 0 16 14" className="shrink-0">
        <path d="M1 3l4 4 3-3 6 4" fill="none" stroke="#d8443a" strokeWidth="1" /><path d="M1 7l4-3 4 4 5-1" fill="none" stroke="#2aa04a" strokeWidth="1" />
        <rect x="2" y="11" width="3" height="3" fill="#2aa04a" /><rect x="6" y="10" width="3" height="4" fill="#2aa04a" /><rect x="10" y="11" width="3" height="3" fill="#2aa04a" />
      </svg>
      <span className="ml-[4px] w-[46px]">Indicadores</span>
      <span className="mx-[2px] h-[16px] w-px bg-[#8da7b3]" /><Chev />
      <span className="ml-[8px] flex gap-px"><span className="h-[9px] w-[2px] bg-white" /><span className="h-[9px] w-[2px] bg-white" /></span>
      <span className="ml-[9px] size-[6px] rounded-full bg-[#7f8f98]" />
      <span className="ml-[4px] flex h-[14px] w-[33px] items-center justify-center rounded-[2px] bg-[#4cd34c] text-white">+0,84 %</span>
      <span className="ml-[3px] w-[44px]">8 may 2026</span>
      <span className="ml-[3px]">EU Stocks 50 Cash (2€)</span>
      <span className="ml-auto flex h-[18px] w-[17px] items-center justify-center border-x border-[#8da7b3]">
        <svg width="13" height="13" viewBox="0 0 13 13"><path d="M2 7a4.5 4.5 0 0 1 8-3" fill="none" stroke="#e03030" strokeWidth="2" /><path d="M11 6a4.5 4.5 0 0 1-8 3" fill="none" stroke="#2aa83a" strokeWidth="2" /></svg>
      </span>
      <span className="ml-[4px] flex w-[30px] items-center gap-[3px] text-[#7f99a6]">
        <span className="mt-[5px] h-[2px] w-[6px] bg-[#7f99a6]" />
        <span className="size-[6px] border border-[#7f99a6]" />
        <span className="text-[10px] leading-none">X</span>
      </span>
    </div>
  );
}

function Chip({ c, t, w }: { c?: string; t: string; w: string }) {
  return (
    <span className={`flex h-[13px] items-center gap-[2px] overflow-hidden whitespace-nowrap border border-[#9ab3bf] bg-[#c9dde5] px-[1px] text-[#222] ${w}`}>
      {c && <span className={`size-[7px] shrink-0 border border-[#777] ${c}`} />}
      <span>{t}</span>
    </span>
  );
}
function Legend() {
  return (
    <div className="absolute left-0 top-0 flex h-[14px] w-[635px] items-center bg-[#c0d6df] text-[8.5px] font-medium tracking-[-0.15px]">
      <span className="ml-[2px] flex gap-[1px]">
        <span className="flex size-[10px] items-center justify-center bg-white text-[8px] leading-none font-bold text-[#e01010]">+</span>
        <span className="flex size-[10px] items-center justify-center bg-white text-[8px] leading-none font-bold text-[#109a10]">↑</span>
        <span className="flex size-[10px] items-center justify-center rounded-full bg-[#3a6fb0] text-[8px] leading-none text-white">×</span>
      </span>
      <span className="ml-[3px] flex gap-[1px]">
        <Chip c="bg-white" t="Precio" w="w-[37px]" />
        <span className="flex h-[13px] w-[12px] flex-col justify-center gap-px border border-[#9ab3bf] bg-[#c9dde5] px-[2px]"><span className="h-px bg-[#333]" /><span className="h-px bg-[#333]" /><span className="h-px bg-[#333]" /></span>
        <Chip c="bg-white" t="Cierre (W)" w="w-[52px]" />
        <Chip c="bg-[#7f959f]" t="Tunel Domenec v4 (t t t t t)" w="w-[114px]" />
        <Chip c="bg-[#111]" t="Multi Avisos (3 f 3 1,5 70 f f)" w="w-[116px]" />
        <Chip c="bg-white" t="DS_CotasHist (1 t t t 3 1 1 f f f f t f f f ...)" w="w-[162px]" />
        <Chip c="bg-gradient-to-r from-[#e01010] via-[#10a010] to-[#e0c010]" t="Control Total Doc v.6" w="w-[93px]" />
      </span>
    </div>
  );
}

function SubHeader({ t, w, c }: { t: string; w: string; c: string }) {
  return (
    <div className={`absolute left-0 top-[1px] flex h-[12px] items-center text-[8.5px] font-medium text-[#222] ${w}`}>
      <span className="flex h-full w-[14px] shrink-0 items-center justify-center bg-[#c9dde5]">
        <span className="flex size-[9px] items-center justify-center rounded-full bg-[#5c7f92] text-[8px] leading-none text-white">×</span>
      </span>
      <span className="flex h-full flex-1 items-center gap-[3px] border border-[#9ab3bf] bg-[#c9dde5] px-[3px]">
        <span className={`size-[7px] shrink-0 ${c}`} />
        <span className="whitespace-nowrap">{t}</span>
      </span>
    </div>
  );
}

const S = ({ children, box = false }: any) => (
  <svg width="16" height="16" viewBox="0 0 16 16" className={box ? "rounded-sm bg-[#a3b8c2]" : ""}>{children}</svg>
);
const hl = (c: string, dot = false) => (
  <S>{dot && <circle cx="4" cy="8" r="1.5" fill="none" stroke={c} />}<line x1={dot ? 5 : 1} x2="15" y1="8" y2="8" stroke={c} strokeWidth="1.2" /></S>
);
const ell = (c: string, f: string) => (
  <S><ellipse cx="8" cy="8" rx="6" ry="4.5" fill={f} stroke={c} strokeWidth="1.3" /><circle cx="2" cy="12" r="1" fill="#1a3ad0" /><circle cx="14" cy="3" r="1" fill="#1a3ad0" /></S>
);
const diag = (c: string) => <S><line x1="1" y1="15" x2="15" y2="1" stroke={c} strokeWidth="1.1" /></S>;
const LEFT_ICONS: React.ReactNode[] = [
  <S box><path d="M5 2l8 7-4 .3 2 4-2 1-2-4-2.5 2.5z" fill="#7f959f" stroke="#e8eef0" strokeWidth=".5" /></S>,
  <S><circle cx="7" cy="6.5" r="4" fill="none" stroke="#333" strokeWidth="1.2" /><line x1="10" y1="9.5" x2="14.5" y2="14" stroke="#333" strokeWidth="1.8" /></S>,
  <S><rect x="1" y="7" width="7" height="7" fill="none" stroke="#2a50d0" strokeDasharray="1.5 1" /><circle cx="8" cy="6" r="4" fill="none" stroke="#333" strokeWidth="1.2" /><line x1="11" y1="9" x2="15" y2="13" stroke="#333" strokeWidth="1.8" /></S>,
  <S><line x1="1" y1="3" x2="11" y2="3" stroke="#222" strokeWidth="1.2" /><path d="M3 12c1-1 1-3 1-4a3 3 0 0 1 6 0c0 1 0 3 1 4z" fill="#e8d020" stroke="#a89010" strokeWidth=".5" /><path d="M10 3l4 6-2 0 1 3-1 .5-2-3z" fill="#eef2f4" stroke="#667" strokeWidth=".5" /></S>,
  <S><path d="M3 12c1.5-1 1.5-4 1.5-5a3.5 3.5 0 0 1 7 0c0 1 0 4 1.5 5z" fill="#e8d020" stroke="#a89010" strokeWidth=".5" /><circle cx="8" cy="13.5" r="1.3" fill="#c0a010" /></S>,
  <S><path d="M1 11L5 3l2 7h7" fill="none" stroke="#1a3ad0" strokeWidth="1.3" /><text x="11" y="15" fontSize="7" fontWeight="700" fill="#1a3ad0">F</text></S>,
  <S><line x1="1" y1="7" x2="12" y2="7" stroke="#1a3ad0" strokeDasharray="2 1" /><text x="10" y="14" fontSize="8" fontWeight="700" fill="#1a3ad0">F</text></S>,
  <S><rect x="2.5" y="4" width="11" height="8" fill="none" stroke="#1a3ad0" strokeWidth="1.2" /><circle cx="2.5" cy="12" r="1.2" fill="#1a3ad0" /><circle cx="13.5" cy="4" r="1.2" fill="#1a3ad0" /></S>,
  <S><rect x="2.5" y="4" width="11" height="8" fill="#b8a0a8" stroke="#d03030" strokeWidth="1.2" /><circle cx="2.5" cy="12" r="1.2" fill="#1a3ad0" /><circle cx="13.5" cy="4" r="1.2" fill="#1a3ad0" /></S>,
  <S><circle cx="3.5" cy="12.5" r="2" fill="none" stroke="#222" strokeWidth="1.1" /><line x1="5" y1="11" x2="12" y2="4" stroke="#111" strokeWidth="1.6" /><path d="M14 2l-1 5-4-4z" fill="#111" /></S>,
  <S><rect x="1.5" y="1.5" width="13" height="13" rx="2" fill="#cfe0ea" stroke="#5a86d8" /><text x="4.5" y="12" fontSize="10" fontWeight="700" fill="#222">T</text></S>,
  <S><circle cx="8" cy="7.5" r="6.5" fill="#d8e8e0" stroke="#5a86d8" /><text x="5" y="11.5" fontSize="10" fontWeight="700" fill="#15801f">T</text></S>,
  <S><circle cx="3.5" cy="12.5" r="2" fill="none" stroke="#222" /><circle cx="12.5" cy="3.5" r="2" fill="none" stroke="#222" /><line x1="5" y1="11" x2="11" y2="5" stroke="#222" /></S>,
  hl("#70f070", true), hl("#30c030", true), hl("#0f8a0f", true), hl("#e02020", true),
  <S><path d="M2 11L11 2l3.5 3.5L5.5 14.5z" fill="#a9bcc6" stroke="#5f7580" /></S>,
  <S><rect x="1" y="3" width="14" height="3" fill="#9ad0a0" /><rect x="1" y="10" width="14" height="3" fill="#d8a0a8" /><path d="M1 11l4-5 3 3 3-4 4 3" fill="none" stroke="#708090" /></S>,
  ell("#d03030", "#a9a0a6"), ell("#996633", "#a99f90"), ell("#1f8a2f", "#90a89a"), ell("#22d022", "#8fb0a0"),
  diag("#222"), diag("#30b030"), diag("#e01818"),
  hl("#222"), hl("#f08a70"), hl("#30e830"), hl("#108a10"), hl("#e81818"), hl("#6a9ef0"), hl("#101090"),
  <S><line x1="8" y1="1" x2="8" y2="15" stroke="#556" strokeWidth="1.6" /></S>,
  <S><path d="M1 14L11 4M1 14h13" fill="none" stroke="#e07030" strokeWidth="1" /><text x="10" y="10" fontSize="6" fill="#1a3ad0">o</text></S>,
  <S><circle cx="7" cy="9" r="5.5" fill="none" stroke="#e07030" /><path d="M7 7v4M5 9h4M12 1v4M10 3h4" stroke="#1a3ad0" strokeWidth="1" /></S>,
  <S><g fill="#1a3ad0">{[[2,13],[5,9],[9,12],[8,5],[12,8],[13,3],[3,5],[14,13]].map((p, i) => <rect key={i} x={p[0]} y={p[1]} width="2" height="2" />)}</g></S>,
  <S><g fill="#1a3ad0">{[[3,12],[6,8],[10,4],[12,11]].map((p, i) => <circle key={i} cx={p[0]} cy={p[1]} r="1.4" />)}</g><line x1="3" y1="12" x2="10" y2="4" stroke="#1a3ad0" /></S>,
  <S><path d="M2 8l4 5 8-10" fill="none" stroke="#2fae3a" strokeWidth="3" /></S>,
  <S><path d="M1 8h3v7H1zM5 8l3-6c2 0 2 2 1.500 5H15l-1 8H5z" fill="#3db23d" stroke="#1f8a1f" strokeWidth=".5" /></S>,
  <S><path d="M2 4l2-2 4 4 4-4 2 2-4 4 4 4-2 2-4-4-4 4-2-2 4-4z" fill="#f01818" /></S>,
];

function LeftBar() {
  return (
    <div className="flex w-[23px] shrink-0 flex-col items-center overflow-hidden border-l-2 border-[#6f8e9c] bg-[#8fb0bf]">
      <div className="flex h-[10px] w-full items-center justify-center bg-[#a8c4d0]">
        <svg width="7" height="5" viewBox="0 0 7 5"><path d="M1 4l2.500-2.500L6 4" fill="none" stroke="#345" /></svg>
      </div>
      {LEFT_ICONS.map((ic, i) => (
        <div key={i} className="flex h-[18.36px] w-full shrink-0 items-center justify-center">{ic}</div>
      ))}
      <div className="mt-[5px] flex h-[10px] w-full items-center justify-center bg-[#a8c4d0]"><Chev /></div>
      <div className="mt-[4px] flex h-[18px] items-center justify-center">
        <svg width="18" height="18" viewBox="0 0 18 18"><circle cx="6" cy="5" r="3.500" fill="#2a9a3a" /><rect x="5" y="6" width="9" height="10" fill="#e8eef0" stroke="#667" /><path d="M7 9h5M7 12h5" stroke="#d04040" /></svg>
      </div>
      <div className="mt-[8px] text-[10px] leading-[10px] font-bold text-[#333]">•••</div>
    </div>
  );
}

function BottomBar() {
  const I = ({ children }: any) => <svg width="14" height="14" viewBox="0 0 14 14" className="shrink-0">{children}</svg>;
  return (
    <div className="flex h-[17px] items-center border-t border-[#6f8e9c] bg-[#9ebfcd]">
      <span className="flex h-full w-[23px] shrink-0 items-center justify-center bg-[#7f9faf]">
        <svg width="14" height="14" viewBox="0 0 14 14"><path d="M2 13V3l4 8 3-9M11 2l2 2-5 8-2 1 0-2z" fill="none" stroke="#c03030" strokeWidth="1.2" /></svg>
      </span>
      <span className="ml-[2px] flex w-[90px] items-center gap-[4px]">
        <I><circle cx="3" cy="7" r="2" fill="#f0f4f6" /><circle cx="11" cy="3" r="2" fill="#f0f4f6" /><circle cx="11" cy="11" r="2" fill="#f0f4f6" /><path d="M3 7l8-4M3 7l8 4" stroke="#f0f4f6" /></I>
        <I><rect x="1" y="3" width="12" height="8" rx="1" fill="#3a7ad0" /><path d="M3 7h8" stroke="#fff" strokeDasharray="1 1" /></I>
        <I><rect x="3" y="1" width="9" height="12" fill="#e8eef0" stroke="#667" /><path d="M5 4h5M5 7h5" stroke="#d04040" /></I>
        <I><rect x="2" y="2" width="4" height="10" fill="#d04040" /><rect x="8" y="3" width="4" height="8" fill="#30a040" /></I>
        <I><rect x="1" y="2" width="9" height="8" fill="#d8e8f0" stroke="#3a6ad0" /><rect x="5" y="5" width="8" height="8" fill="#f0f4f6" stroke="#3a6ad0" /></I>
      </span>
      <span className="w-[8px] text-[11px] leading-none text-[#556]">«</span>
      <span className="ml-[1px] flex h-[13px] w-[11px] items-center justify-center border border-[#7f98a4] bg-[#c9dde5] text-[7px]">◂</span>
      <span className="h-[13px] w-[51px] bg-[#9dbecc]" />
      <span className="h-[13px] flex-1 bg-[#b4d0da]" />
      <span className="flex h-[13px] w-[11px] items-center justify-center border border-[#7f98a4] bg-[#c9dde5] text-[7px]">▸</span>
      <span className="ml-[6px] flex items-center gap-[4px]">
        <I><path d="M3 5h6a3 3 0 0 1 0 7H6M3 5l3-3M3 5l3 3" fill="none" stroke="#6a9ad0" strokeWidth="1.6" /></I>
        <I><path d="M11 5H5a3 3 0 0 0 0 7h3M11 5L8 2M11 5L8 8" fill="none" stroke="#6a9ad0" strokeWidth="1.6" /></I>
        <I><path d="M2 12l6-6 2 2-6 6z" fill="#d04040" /><circle cx="10" cy="4" r="2.500" fill="#30a040" /></I>
        <I><circle cx="6" cy="6" r="4" fill="none" stroke="#222" strokeWidth="1.4" /><path d="M9 9l3 3" stroke="#222" strokeWidth="2" /></I>
        <I><circle cx="6" cy="6" r="4" fill="#fff" stroke="#222" strokeWidth="1.4" /><path d="M4 6h4" stroke="#222" /><path d="M9 9l3 3" stroke="#222" strokeWidth="2" /></I>
        <I><circle cx="6" cy="6" r="4" fill="#fff" stroke="#222" strokeWidth="1.4" /><path d="M4 6h4M6 4v4" stroke="#1a3ad0" /><path d="M9 9l3 3" stroke="#222" strokeWidth="2" /></I>
        <I><path d="M3 3h8l-3 4v5l-2-1V7z" fill="#3a6ad0" /></I>
      </span>
    </div>
  );
}

export default function App() {
  return (
    <div className="flex h-[863px] w-[1600px] flex-col overflow-hidden bg-white font-[family-name:Roboto,sans-serif]">
      <TopBar />
      <div className="flex min-h-0 flex-1">
        <LeftBar />
        <div className="flex w-[1577px] flex-col">
          <div className="relative flex h-[505px]">
            <MainSvg />
            <Axis top={19} h={505} items={[
              {y:35.7,t:"6.500"},{y:78.3,t:"6.000"},{y:121,t:"5.500"},{y:127.6,t:"5.440,7",c:"#10a010",box:true},{y:160,t:"5.055,3",c:"#b01010",box:true},{y:208,t:"4.500"},
              {y:243,t:"4.098,3",c:"#1010c0",box:true},{y:293,t:"3.500"},{y:336.7,t:"3.000"},{y:379.6,t:"2.500"},{y:422.4,t:"2.000"},{y:465,t:"1.500"},{y:508,t:"1.000"},
            ]} />
            <Legend />
            <div className="absolute left-[10px] top-[11px] font-[family-name:'Liberation_Sans',sans-serif] text-[33px] leading-[38px] font-bold text-black">
              <div>STXE, Q</div>
              <div>EU Stocks 50 Cash (2€)</div>
            </div>
            <div className="absolute left-[2px] top-[495px] text-[9px] leading-[10px] text-[#444]">IT-Finance.com - Tiempo Real</div>
          </div>
          <div className="relative flex h-[94px] border-t border-[#9fb0ba]">
            <div className="-mt-px"><TrenesSvg /></div>
            <Axis top={524} h={93} items={[
              {y:530,t:"100"},{y:537,t:"93,440",c:"#c01010",box:true},{y:545.7,t:"93,052",c:"#c01010",box:true},{y:552.7,t:"80",box:true},{y:565,t:"60"},{y:573,t:"50",c:"#1010b0",box:true},{y:581,t:"40"},{y:598,t:"20",box:true},{y:612.7,t:"0",box:true},
            ]} />
            <SubHeader t="Sistema de trenes Doc v4 (f f)" w="w-[139px]" c="bg-[#222]" />
          </div>
          <div className="relative flex h-[77px] border-t border-[#9fb0ba]">
            <div className="-mt-px"><WillySvg /></div>
            <Axis top={618} h={76} items={[
              {y:630.7,t:"-6,920",c:"#10b010",box:true},{y:642,t:"-25",c:"#1010b0",box:true},{y:651,t:"-40"},{y:658,t:"-50",c:"#1010b0",box:true},{y:665,t:"-60"},{y:675,t:"-75",c:"#c01010",box:true},{y:689,t:"-100",box:true},
            ]} />
            <SubHeader t="Willy Doc (t)" w="w-[76px]" c="bg-[#7f959f]" />
          </div>
          <div className="relative flex h-[91px] border-t border-[#9fb0ba]">
            <div className="-mt-px"><AwesomeSvg /></div>
            <Axis top={695} h={90} items={[
              {y:710.7,t:"2.000"},{y:717,t:"1.440,1",c:"#10b010"},{y:726,t:"1.305,2",c:"#e010e0"},{y:732,t:"1.205,3",c:"#e010e0",box:true},{y:745,t:"0",c:"#1010b0",box:true},{y:755,t:"0",c:"#e010e0",box:true},{y:768,t:"-1.000"},
            ]} />
            <SubHeader t="Awesome Evolution Doc" w="w-[120px]" c="bg-[#7f959f]" />
          </div>
          <div className="relative flex h-[47px] border-t border-[#9fb0ba]">
            <div className="-mt-px"><BarraSvg /></div>
            <Axis top={786} h={46} items={[{y:791,t:"0,505"},{y:811,t:"0,5000",box:true},{y:829,t:"0,495"}]} />
            <SubHeader t="Barra Fuerza Fondo Mercado v4 (f)" w="w-[160px]" c="bg-[#222]" />
          </div>
          <div className="relative h-[13px] border-t border-[#9fb0ba] bg-white">
            {YEARX.map((g) => (
              <span key={g.y} className="absolute top-[1px] w-[24px] text-center text-[9px] leading-[11px] font-bold text-[#333]" style={{ left: g.x - 23 - 12 }}>
                {g.y}
              </span>
            ))}
          </div>
        </div>
      </div>
      <BottomBar />
    </div>
  );
}
